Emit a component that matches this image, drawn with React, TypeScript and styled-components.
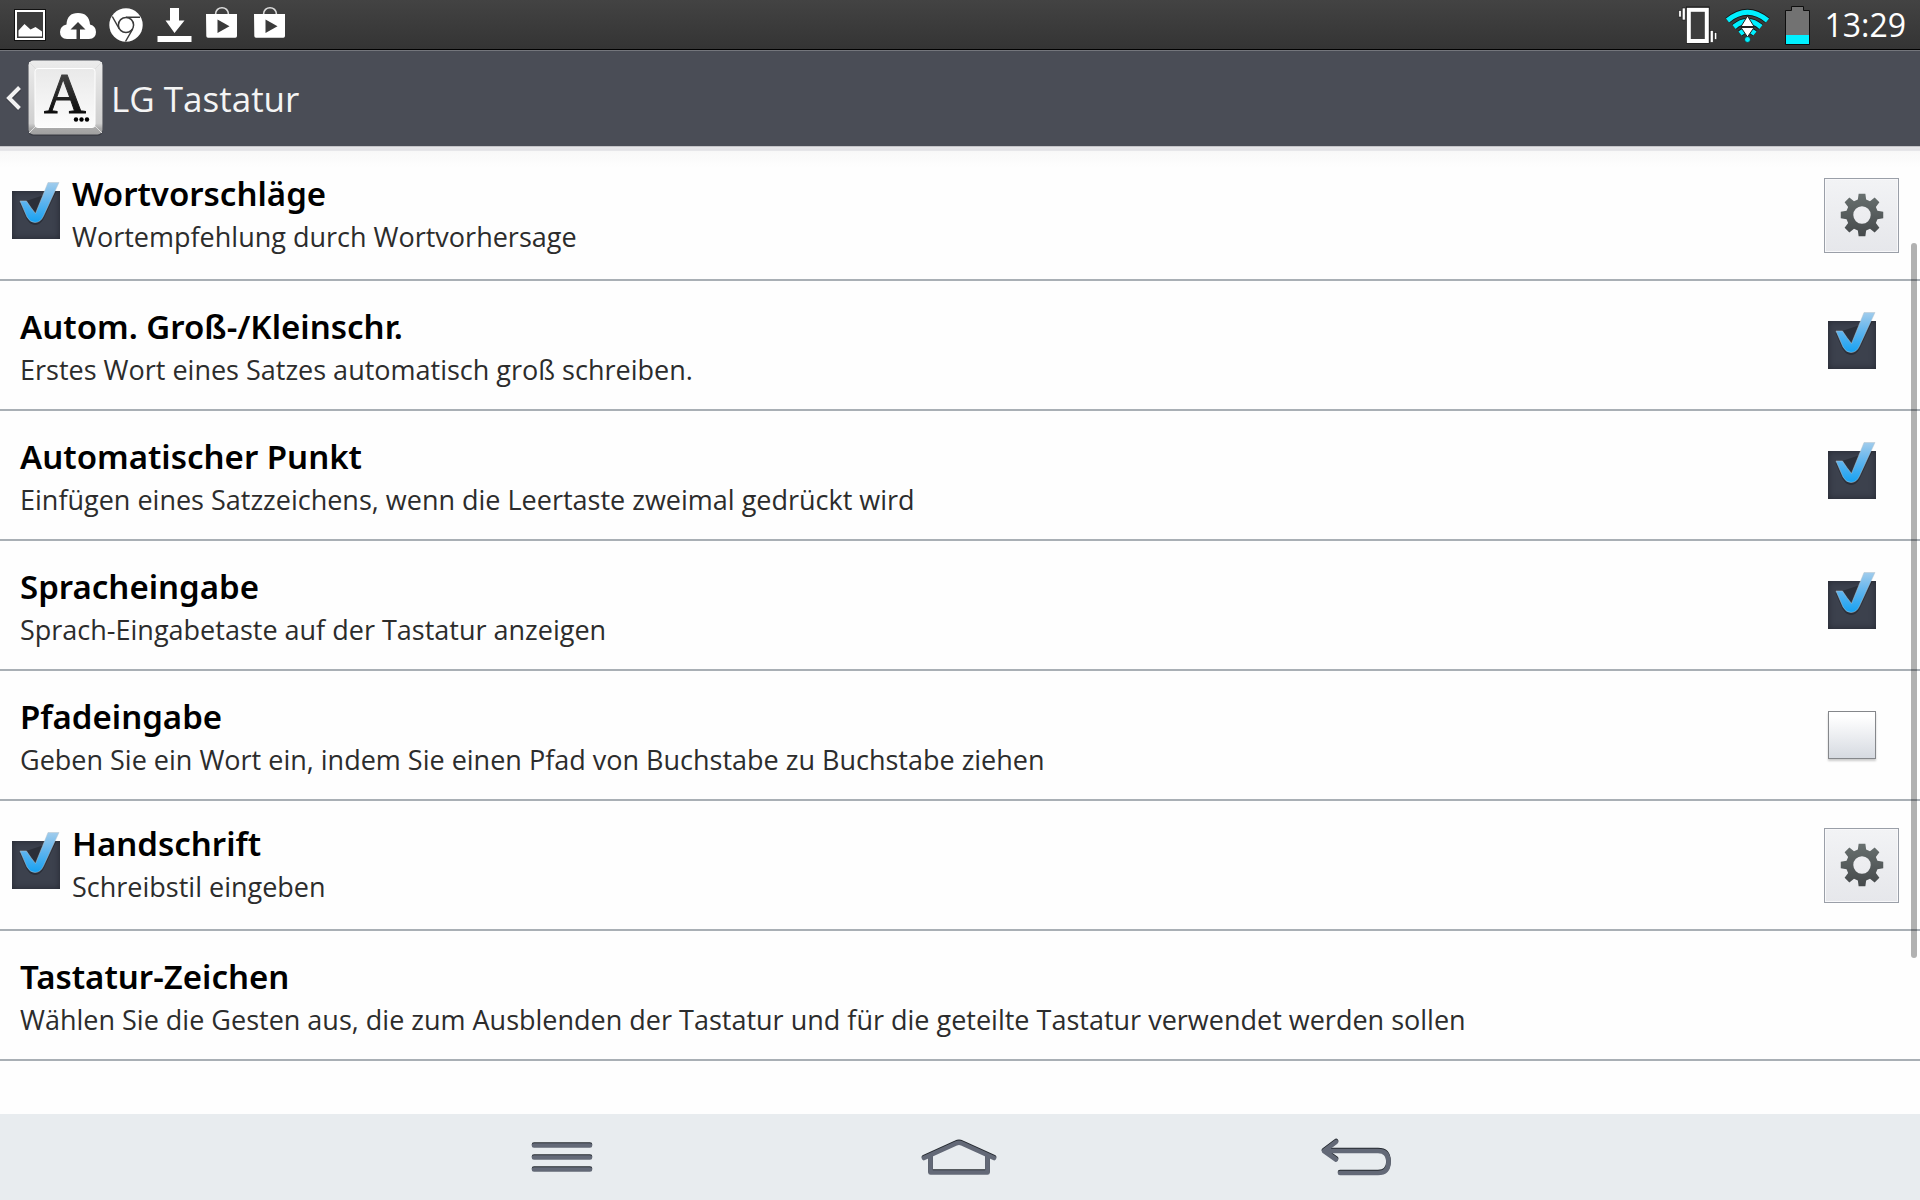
import React, { useState } from "react";
import styled, { createGlobalStyle } from "styled-components";

const GlobalStyle = createGlobalStyle`
  *, *::before, *::after { box-sizing: border-box; }
  body {
    margin: 0;
    background: #fefefe;
    font-family: "Open Sans", "Noto Sans", sans-serif;
  }
`;

const Screen = styled.div`
  display: flex;
  flex-direction: column;
  height: 100vh;
  overflow: hidden;
`;

/* ---------- status bar ---------- */

const StatusBar = styled.div`
  display: flex;
  justify-content: space-between;
  flex: none;
  height: 50px;
  padding: 0 14px 0 6px;
  background: linear-gradient(#434343, #343434);
  border-bottom: 1px solid #000;
`;

const StatusGroup = styled.div`
  display: flex;
  align-items: center;
`;

const StatusIcon = styled.svg<{ $w?: number }>`
  display: block;
  width: ${(p) => p.$w ?? 48}px;
  height: 49px;
`;

const Clock = styled.time`
  margin-left: 8px;
  color: #fff;
  font-size: 32px;
  line-height: 48px;
`;

/* ---------- title bar ---------- */

const TitleBar = styled.header`
  display: flex;
  align-items: center;
  flex: none;
  height: 96px;
  padding-left: 6px;
  background: #4a4d56;
  border-top: 1px solid #74767c;
`;

const UpButton = styled.button`
  display: flex;
  align-items: center;
  gap: 6px;
  padding: 0 0 2px;
  border: 0;
  background: none;
  cursor: pointer;
`;

const Title = styled.h1`
  margin: 0 0 0 8px;
  color: #f4f4f4;
  font-size: 35px;
  font-weight: 400;
  line-height: 48px;
`;

const TitleShadow = styled.div`
  flex: none;
  height: 5px;
  background: linear-gradient(#c4c4c8 0 1px, #e6e6e9 1px 2px, #e1e1e5 4px, #ebebed 5px);
`;

/* ---------- settings list ---------- */

const ListArea = styled.main`
  position: relative;
  flex: 1;
  min-height: 0;
  overflow: hidden;
  background: linear-gradient(#f8f8f8, #fefefe 16px);
`;

const List = styled.ul`
  margin: 0;
  padding: 0;
  list-style: none;
`;

const Row = styled.li<{ $split?: boolean }>`
  display: flex;
  align-items: center;
  min-height: 130px;
  padding: ${(p) => (p.$split ? "0 21px 0 12px" : "0 44px 0 20px")};
  border-bottom: 2px solid #a9afb5;
`;

const RowText = styled.label<{ $split?: boolean }>`
  flex: 1;
  padding: ${(p) => (p.$split ? "0 0 0 12px" : "6px 0 0")};
`;

const RowTitle = styled.span`
  display: block;
  color: #000;
  font-family: "Noto Sans", "Open Sans", sans-serif;
  font-size: 33px;
  font-weight: 600;
  line-height: 44px;
`;

const RowHint = styled.span`
  display: block;
  color: #2c2c2c;
  font-size: 27px;
  line-height: 42px;
`;

const CheckHolder = styled.span`
  position: relative;
  flex: none;
  width: 48px;
  height: 48px;
`;

const CheckInput = styled.input`
  appearance: none;
  display: block;
  width: 48px;
  height: 48px;
  margin: 0;
  border: 1px solid #85878b;
  background: linear-gradient(#fff 10%, #d6dae1);
  box-shadow: 0 2px 2px rgba(0, 0, 0, 0.2);
  cursor: pointer;

  &:checked {
    border: 0;
    background: #3c414d;
    box-shadow: inset 0 0 6px rgba(20, 22, 30, 0.6);
  }
`;

const CheckMark = styled.svg`
  position: absolute;
  left: 0;
  bottom: 0;
  width: 48px;
  height: 60px;
  pointer-events: none;
`;

const GearButton = styled.button`
  display: flex;
  align-items: center;
  justify-content: center;
  flex: none;
  width: 75px;
  height: 75px;
  padding: 0;
  border: 1px solid #9a9fa8;
  background: linear-gradient(#f2f3f5, #e6e7eb);
  box-shadow: inset 0 0 0 1px #f8f8fa;
  cursor: pointer;
`;

const ScrollThumb = styled.div`
  position: absolute;
  top: 92px;
  right: 3px;
  bottom: 156px;
  width: 6px;
  border-radius: 3px;
  background: rgba(0, 0, 0, 0.3);
`;

/* ---------- navigation bar ---------- */

const NavBar = styled.nav`
  display: flex;
  justify-content: center;
  flex: none;
  height: 86px;
  background: #e8ecef;
`;

const NavButton = styled.button`
  display: flex;
  align-items: center;
  justify-content: center;
  width: 397px;
  padding: 0 2px 0 0;
  border: 0;
  background: none;
  cursor: pointer;
`;

/* ---------- drawings ---------- */

const PictureIcon = () => (
  <StatusIcon viewBox="0 0 48 49">
    <rect x="8.5" y="9.5" width="31" height="31" fill="none" stroke="#111" />
    <rect x="10" y="11" width="28" height="28" fill="#3d3d3d" stroke="#fff" strokeWidth="2" />
    <path d="M12.5 36.5V30.5L18.5 24L24.5 29.5L29.5 27L36 31.5V36.5Z" fill="#fff" />
  </StatusIcon>
);

const CloudIcon = () => (
  <StatusIcon viewBox="0 0 48 49">
    <path d="M13 39Q6 38.5 6 32Q6 26 12.5 24.5Q13 13 24 13Q35 13 36 24.5Q42 26 42 32Q42 38.5 35 39Z" fill="#fff" />
    <path d="M24 22L31.5 29.5H26V39H22.5V29.5H16.5Z" fill="#3a3a3a" />
  </StatusIcon>
);

const ChromeIcon = () => (
  <StatusIcon viewBox="0 0 48 49">
    <circle cx="24" cy="25" r="16.7" fill="#fff" />
    <circle cx="24" cy="25" r="7.6" fill="none" stroke="#3a3a3a" strokeWidth="1.5" />
    <path d="M24 17.2H38M17.3 29L10.3 16.5M30.7 29L23.5 41.5" fill="none" stroke="#3a3a3a" strokeWidth="1.5" />
  </StatusIcon>
);

const DownloadIcon = () => (
  <StatusIcon viewBox="0 0 48 49">
    <path d="M20 8H29V20.5H34.5L24.5 33L15.5 20.5H20ZM7.5 36H41.5V42H7.5Z" fill="#fff" />
  </StatusIcon>
);

const BagIcon = () => (
  <StatusIcon viewBox="0 0 48 49">
    <path d="M17.5 14.5C17.5 5.5 30.5 5.5 30.5 14.5" fill="none" stroke="#ddd" strokeWidth="1.6" />
    <path d="M8 14H39V36Q39 37.7 37.3 37.7H10Q8.3 37.7 8.3 36Z" fill="#fff" />
    <path d="M19.5 19.5L31.5 26.3L19.5 33Z" fill="#3a3a3a" />
  </StatusIcon>
);

const VibrateIcon = () => (
  <StatusIcon $w={44} viewBox="0 0 44 49">
    <rect x="8" y="6.5" width="23.5" height="37" fill="#161616" />
    <rect x="10.8" y="9.8" width="18" height="31.2" fill="#3d3d3d" stroke="#fff" strokeWidth="4" />
    <g stroke="#161616" strokeWidth="0.6" fill="#fff">
      <rect x="4.2" y="8" width="3" height="12" />
      <rect x="0.8" y="10.5" width="2.4" height="6.5" />
      <rect x="32.2" y="30.5" width="3" height="12" />
      <rect x="36.4" y="32.5" width="2.4" height="7" />
    </g>
  </StatusIcon>
);

const WifiIcon = () => (
  <StatusIcon $w={50} viewBox="0 0 50 49">
    {["#161616", "#00f0ff"].map((c, i) => (
      <g key={c} fill="none" stroke={c} strokeWidth={i ? 5 : 6.6}>
        <path d="M5.5 20.5Q25.5 4 45.5 20.5" />
        <path d="M12 27Q25.5 15.5 39 27" />
        <path d="M18 33.5Q25.5 27 33 33.5" />
      </g>
    ))}
    <path d="M25.500 16L32 26.500H19ZM25.500 37L32 27.500H19Z" fill="#fff" stroke="#222" />
    <circle cx="25.5" cy="39.5" r="2.9" fill="#00f0ff" stroke="#161616" strokeWidth="0.6" />
  </StatusIcon>
);

const BatteryIcon = () => (
  <StatusIcon $w={44} viewBox="0 0 44 49">
    <path d="M13.5 10.5H19.5V6.5H31.5V10.5H37.5V44.5H13.5Z" fill="#727272" stroke="#0e0e0e" />
    <path d="M14 35H37V44H14Z" fill="#00f0ff" />
  </StatusIcon>
);

const ChevronIcon = () => (
  <svg width="16" height="28" viewBox="0 0 16 28">
    <path d="M13.5 5L3 15L13.5 25" fill="none" stroke="#2c2e34" strokeWidth="4.5" opacity="0.5" />
    <path d="M13.5 3.5L3 14L13.5 24.5" fill="none" stroke="#f2f2f2" strokeWidth="4" />
  </svg>
);

const KeyIcon = () => (
  <svg width="75" height="76" viewBox="0 0 75 76">
    <defs>
      <linearGradient id="keyRim" x1="0" y1="0" x2="0" y2="1">
        <stop offset="0" stopColor="#ececec" />
        <stop offset="0.85" stopColor="#cfcfcf" />
        <stop offset="0.92" stopColor="#a9a9a9" />
        <stop offset="1" stopColor="#a0a0a0" />
      </linearGradient>
      <linearGradient id="keyFace" x1="0" y1="0" x2="0" y2="1">
        <stop offset="0" stopColor="#e9e9e9" />
        <stop offset="1" stopColor="#fcfcfc" />
      </linearGradient>
      <linearGradient id="keyInk" x1="0" y1="0" x2="0" y2="1">
        <stop offset="0" stopColor="#555" />
        <stop offset="0.8" stopColor="#0c0c0c" />
      </linearGradient>
    </defs>
    <rect x="0" y="1.5" width="75" height="74.5" rx="6" fill="#2d2f35" opacity="0.5" />
    <rect x="0.5" y="0.5" width="74" height="74" rx="5" fill="url(#keyRim)" />
    <path d="M1 73L8 66M74 73L67 66M1 2L8 9M74 2L67 9" stroke="#dedede" />
    <rect x="7" y="8.5" width="60" height="59" rx="3" fill="url(#keyFace)" stroke="#fff" />
    <text
      x="37"
      y="53"
      textAnchor="middle"
      fontFamily="'Liberation Serif', serif"
      fontSize="58"
      fill="url(#keyInk)"
      stroke="url(#keyInk)"
      strokeWidth="1"
    >
      A
    </text>
    <circle cx="48" cy="59.5" r="2.2" />
    <circle cx="53.5" cy="59.5" r="2.2" />
    <circle cx="59" cy="59.5" r="2.2" />
  </svg>
);

const gearPath = (() => {
  const at = (deg: number, r: number) => {
    const a = (deg * Math.PI) / 180;
    return `${(22 + r * Math.sin(a)).toFixed(2)} ${(22 - r * Math.cos(a)).toFixed(2)}`;
  };
  let d = "";
  for (let t = 0; t < 360; t += 45) {
    d += `${t ? "L" : "M"}${at(t - 15, 16)}L${at(t - 9, 21.5)}L${at(t + 9, 21.5)}L${at(t + 15, 16)}`;
  }
  return d + "ZM22 13.3a8.7 8.7 0 1 0 0 17.4a8.7 8.7 0 1 0 0 -17.4Z";
})();

const GearIcon = () => (
  <svg width="44" height="44" viewBox="0 0 44 44">
    <defs>
      <linearGradient id="gearFill" x1="0" y1="0" x2="0" y2="1">
        <stop offset="0" stopColor="#68706f" />
        <stop offset="1" stopColor="#45494b" />
      </linearGradient>
    </defs>
    <path d={gearPath} fill="url(#gearFill)" fillRule="evenodd" />
  </svg>
);

const tickPath = "M8 10H14.5Q19 17 23.5 22.5L36 -8.5H47L31.5 25Q28.5 31.5 23 31.5Q18 31.5 15 26Z";

const Tick = () => (
  <CheckMark viewBox="0 -12 48 60">
    <defs>
      <linearGradient id="tickFill" gradientUnits="userSpaceOnUse" x1="0" y1="-9" x2="0" y2="30">
        <stop offset="0" stopColor="#a3cdec" />
        <stop offset="0.5" stopColor="#5fb4ee" />
        <stop offset="1" stopColor="#1ba3f2" />
      </linearGradient>
    </defs>
    <path d="M8 12L15 28Q18 33.5 23 33.5Q28.5 33.5 31.5 27L44 0" fill="#14161c" stroke="#14161c" opacity="0.4" />
    <path d={tickPath} fill="url(#tickFill)" stroke="#b9c4cc" strokeWidth="0.5" />
  </CheckMark>
);

const NavDrawing = ({ w, h, d }: { w: number; h: number; d: string }) => (
  <svg width={w} height={h} viewBox={`0 0 ${w} ${h}`} fill="none" strokeLinecap="round" strokeLinejoin="round">
    <path d={d} stroke="#262b31" strokeWidth="4.6" />
    <path d={d} stroke="#636977" strokeWidth="4.6" transform="translate(0 1)" />
  </svg>
);

/* ---------- data ---------- */

type Setting = { id: string; title: string; hint: string; checked?: boolean; split?: boolean };

const settings: Setting[] = [
  { id: "suggest", title: "Wortvorschläge", hint: "Wortempfehlung durch Wortvorhersage", checked: true, split: true },
  { id: "caps", title: "Autom. Groß-/Kleinschr.", hint: "Erstes Wort eines Satzes automatisch groß schreiben.", checked: true },
  { id: "period", title: "Automatischer Punkt", hint: "Einfügen eines Satzzeichens, wenn die Leertaste zweimal gedrückt wird", checked: true },
  { id: "voice", title: "Spracheingabe", hint: "Sprach-Eingabetaste auf der Tastatur anzeigen", checked: true },
  { id: "path", title: "Pfadeingabe", hint: "Geben Sie ein Wort ein, indem Sie einen Pfad von Buchstabe zu Buchstabe ziehen", checked: false },
  { id: "hand", title: "Handschrift", hint: "Schreibstil eingeben", checked: true, split: true },
  { id: "gestures", title: "Tastatur-Zeichen", hint: "Wählen Sie die Gesten aus, die zum Ausblenden der Tastatur und für die geteilte Tastatur verwendet werden sollen" },
];

const SettingRow = ({ id, title, hint, checked, split }: Setting) => {
  const [on, setOn] = useState(!!checked);
  const hasBox = checked !== undefined;
  const box = hasBox && (
    <CheckHolder>
      <CheckInput id={id} type="checkbox" checked={on} onChange={(e) => setOn(e.target.checked)} />
      {on && <Tick />}
    </CheckHolder>
  );
  return (
    <Row $split={split}>
      {split && box}
      <RowText as={hasBox ? "label" : "div"} htmlFor={hasBox ? id : undefined} $split={split}>
        <RowTitle>{title}</RowTitle>
        <RowHint>{hint}</RowHint>
      </RowText>
      {split ? (
        <GearButton type="button" aria-label={`${title} Einstellungen`}>
          <GearIcon />
        </GearButton>
      ) : (
        box
      )}
    </Row>
  );
};

export default function App() {
  return (
    <Screen>
      <GlobalStyle />
      <StatusBar>
        <StatusGroup>
          <PictureIcon />
          <CloudIcon />
          <ChromeIcon />
          <DownloadIcon />
          <BagIcon />
          <BagIcon />
        </StatusGroup>
        <StatusGroup>
          <VibrateIcon />
          <WifiIcon />
          <BatteryIcon />
          <Clock>13:29</Clock>
        </StatusGroup>
      </StatusBar>
      <TitleBar>
        <UpButton type="button" aria-label="Zurück">
          <ChevronIcon />
          <KeyIcon />
        </UpButton>
        <Title>LG Tastatur</Title>
      </TitleBar>
      <TitleShadow />
      <ListArea>
        <List>
          {settings.map((s) => (
            <SettingRow key={s.id} {...s} />
          ))}
        </List>
        <ScrollThumb />
      </ListArea>
      <NavBar>
        <NavButton type="button" aria-label="Menü">
          <NavDrawing w={62} h={34} d="M3 4.5H59M3 16.5H59M3 28.5H59" />
        </NavButton>
        <NavButton type="button" aria-label="Startseite">
          <NavDrawing w={76} h={36} d="M3 18L35 3.5Q38 2 41 3.5L73 18M9.5 16V32.5H66.5V16" />
        </NavButton>
        <NavButton type="button" aria-label="Zurück">
          <NavDrawing w={72} h={38} d="M16 3L4 12L16 20.5M6 12H58Q68.5 12 68.5 23Q68.5 34 58 34H20" />
        </NavButton>
      </NavBar>
    </Screen>
  );
}
